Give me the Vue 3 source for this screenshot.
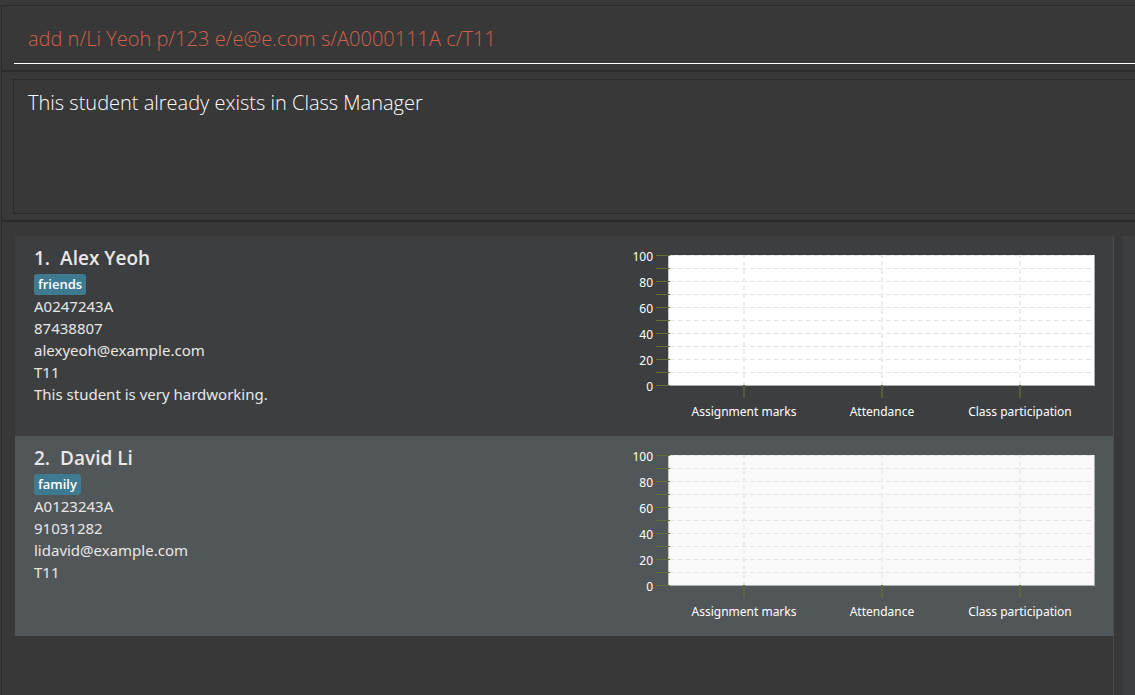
<script setup>
import { ref } from 'vue'

const command = ref('add n/Li Yeoh p/123 e/e@e.com s/A0000111A c/T11')
const result = ref('This student already exists in Class Manager')

const students = [
  {
    index: 1,
    name: 'Alex Yeoh',
    tag: 'friends',
    details: ['A0247243A', '87438807', 'alexyeoh@example.com', 'T11', 'This student is very hardworking.'],
  },
  {
    index: 2,
    name: 'David Li',
    tag: 'family',
    details: ['A0123243A', '91031282', 'lidavid@example.com', 'T11'],
  },
]

const ticks = Array.from({ length: 11 }, (_, i) => ({ value: i * 10, y: 136 - i * 13 }))
const labelled = ticks.filter((t) => t.value % 20 === 0)
const categories = [
  { label: 'Assignment marks', x: 122 },
  { label: 'Attendance', x: 260 },
  { label: 'Class participation', x: 398 },
]
</script>

<template>
  <main class="window">
    <form class="pane command-pane" @submit.prevent>
      <input v-model="command" class="command" type="text" aria-label="Command" spellcheck="false" />
    </form>

    <section class="pane result-pane">
      <textarea v-model="result" class="result" aria-label="Result" readonly spellcheck="false"></textarea>
    </section>

    <section class="pane list-pane">
      <ul class="students">
        <li v-for="s in students" :key="s.index" class="card">
          <div class="info">
            <h2 class="name"><span>{{ s.index }}.</span><span>{{ s.name }}</span></h2>
            <span class="tag">{{ s.tag }}</span>
            <p v-for="d in s.details" :key="d" class="detail">{{ d }}</p>
          </div>
          <svg class="chart" width="473" height="177" viewBox="0 -3 473 177" role="img" :aria-label="'Scores of ' + s.name">
            <rect class="plot" x="46" y="5" width="427" height="131" />
            <line v-for="t in ticks" :key="'g' + t.value" class="grid" x1="48" x2="471" :y1="t.y - 0.5" :y2="t.y - 0.5" />
            <line v-for="c in categories" :key="'v' + c.label" class="grid column" :x1="c.x" :x2="c.x" y1="136" y2="5" />
            <path class="edge side" d="M46.5 5V136" />
            <path class="edge" d="M472.5 5V136" />
            <path class="edge base" d="M46 135.5H473" />
            <line v-for="t in ticks" :key="'t' + t.value" class="tick" x1="34" x2="48" :y1="t.y - 0.5" :y2="t.y - 0.5" />
            <line v-for="c in categories" :key="'c' + c.label" class="tick column" :x1="c.x" :x2="c.x" y1="135" y2="148" />
            <text v-for="t in labelled" :key="'l' + t.value" class="label" x="31" :y="t.y + 5" text-anchor="end">{{ t.value }}</text>
            <text v-for="c in categories" :key="c.label" class="label" :x="c.x" y="166" text-anchor="middle">{{ c.label }}</text>
          </svg>
        </li>
      </ul>
      <aside class="side-panel"></aside>
    </section>
  </main>
</template>

<style>
body {
  background: #383838;
}
</style>

<style scoped>
.window {
  box-sizing: border-box;
  min-height: 100vh;
  padding: 5px 0 0 1px;
  display: flex;
  flex-direction: column;
  overflow: hidden;
  font-family: "Noto Sans", "Open Sans", sans-serif;
  color: #e8e8e8;
}
.pane {
  box-sizing: border-box;
  border: 1px solid #2b2b2b;
  border-right: 0;
}
.command-pane {
  padding: 8px 0 6px 12px;
}
.command {
  box-sizing: border-box;
  display: block;
  width: 100%;
  height: 50px;
  padding: 0 14px;
  border: 0;
  border-bottom: 1px solid #fff;
  outline: 0;
  background: transparent;
  color: #d0614c;
  font: 300 20px "Open Sans", "Noto Sans", sans-serif;
}
.result-pane {
  padding: 7px 0 6px 11px;
}
.result {
  box-sizing: border-box;
  display: block;
  width: 100%;
  height: 135px;
  padding: 9px 14px;
  border: 1px solid #2b2b2b;
  border-right: 0;
  outline: 0;
  resize: none;
  background: transparent;
  color: #fff;
  font: 300 20px/28px "Open Sans", "Noto Sans", sans-serif;
}
.list-pane {
  flex: 1;
  display: flex;
  gap: 9px;
  padding: 14px 0 0 13px;
  border-bottom: 0;
}
.students {
  flex: 1;
  margin: 0;
  padding: 0;
  list-style: none;
  border-right: 1px solid #4c4c4c;
}
.side-panel {
  width: 12px;
  background: #3c3e3f;
}
.card {
  box-sizing: border-box;
  min-height: 200px;
  padding: 11px 18px 9px 19px;
  display: flex;
  justify-content: space-between;
  background: #3c3e3f;
}
.card:nth-child(even) {
  background: #515658;
}
.chart {
  flex: none;
}
.name {
  display: flex;
  gap: 10px;
  margin: 0 0 5px;
  font-family: "Open Sans", "Noto Sans", sans-serif;
  font-size: 19px;
  line-height: 22px;
  font-weight: 600;
}
.tag {
  display: block;
  width: fit-content;
  padding: 0 4px;
  border-radius: 3px;
  background: #3e7b91;
  color: #fff;
  font-family: "Open Sans", "Noto Sans", sans-serif;
  font-size: 13px;
  line-height: 21px;
  font-weight: 600;
}
.detail {
  margin: 0;
  font-size: 15px;
  line-height: 22px;
}
.plot {
  fill: #fff;
}
.card:nth-child(even) .plot {
  fill: #f9f9f9;
}
.grid {
  stroke: #e3e3e3;
  stroke-dasharray: 5 3;
}
.grid.column {
  stroke: #ededed;
  stroke-width: 2;
}
.edge {
  fill: none;
  stroke: #a8abac;
}
.edge.side {
  stroke: #c6c4bf;
}
.edge.base {
  stroke: #adb2b2;
}
.tick {
  stroke: #657033;
}
.tick.column {
  stroke: #535b39;
  stroke-width: 2;
}
.card:nth-child(even) .tick.column {
  stroke: #5c663f;
}
.label {
  fill: #fff;
  font-size: 12px;
}
</style>
